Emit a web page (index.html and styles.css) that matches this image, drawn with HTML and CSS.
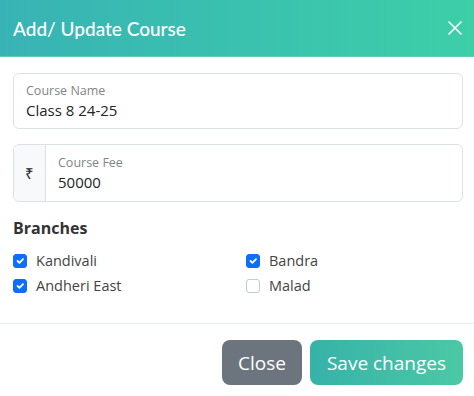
FILE: index.html
```html
<!DOCTYPE html>
<html lang="en">
<head>
    <meta charset="UTF-8">
    <meta name="viewport" content="width=device-width, initial-scale=1.0">
    <title>Add/ Update Course</title>
    <link rel="stylesheet" href="styles.css">
</head>
<body>
    <div class="modal">
        <div class="modal-header">
            <h5 class="modal-title">Add/ Update Course</h5>
            <button class="btn-close" aria-label="Close">
                <svg width="14" height="14" viewBox="0 0 14 14">
                    <path d="M1 1L13 13M13 1L1 13" stroke="#fff" stroke-width="1.6" stroke-linecap="round"/>
                </svg>
            </button>
        </div>
        <div class="modal-body">
            <div class="field">
                <label>Course Name</label>
                <div class="value">Class 8 24-25</div>
            </div>
            <div class="input-group">
                <span class="addon">₹</span>
                <div class="field field-inner">
                    <label>Course Fee</label>
                    <div class="value">50000</div>
                </div>
            </div>
            <h6 class="section-title">Branches</h6>
            <div class="branches">
                <label class="check"><span class="box checked"></span>Kandivali</label>
                <label class="check"><span class="box checked"></span>Bandra</label>
                <label class="check"><span class="box checked"></span>Andheri East</label>
                <label class="check"><span class="box"></span>Malad</label>
            </div>
        </div>
        <div class="modal-footer">
            <button class="btn btn-secondary">Close</button>
            <button class="btn btn-primary">Save changes</button>
        </div>
    </div>
</body>
</html>
```

FILE: styles.css
```css
body {
    margin: 0;
    font-family: "Open Sans", sans-serif;
    background-color: #fff;
    color: #212529;
}
.modal {
    width: 474px;
    height: 396px;
    display: flex;
    flex-direction: column;
}
.modal-header {
    height: 56px;
    display: flex;
    align-items: center;
    justify-content: space-between;
    padding: 0 12px 0 13px;
    background: linear-gradient(90deg, #38b3b5, #3dcfa8);
    border-bottom: 1px solid #5fd0b8;
}
.modal-title {
    margin: 0;
    font-family: "Lato", sans-serif;
    font-size: 19px;
    font-weight: 500;
    color: #fff;
}
.btn-close {
    border: none;
    background: none;
    padding: 0;
    width: 14px;
    height: 14px;
    display: flex;
}
.modal-body {
    padding: 16px 11px 0 13px;
    flex: 1;
}
.field {
    height: 56px;
    border: 1px solid #dee2e6;
    border-radius: 6px;
    padding: 0 12px;
    box-sizing: border-box;
    display: flex;
    flex-direction: column;
    justify-content: center;
}
.field label {
    font-size: 12.5px;
    color: #80858a;
    line-height: 17px;
}
.field .value {
    font-size: 15px;
    line-height: 22px;
    color: #212529;
}
.input-group {
    display: flex;
    margin-top: 15px;
    height: 56px;
    border: 1px solid #dee2e6;
    border-radius: 6px;
    overflow: hidden;
}
.addon {
    width: 31px;
    background-color: #f8f9fa;
    border-right: 1px solid #dee2e6;
    display: flex;
    align-items: center;
    justify-content: center;
    font-size: 15px;
}
.field-inner {
    flex: 1;
    border: none;
    border-radius: 0;
    height: 100%;
}
.section-title {
    margin: 15px 0 11px;
    font-size: 16px;
    font-weight: 700;
    color: #333;
}
.branches {
    display: grid;
    grid-template-columns: 233px 1fr;
    row-gap: 4px;
}
.check {
    display: flex;
    align-items: center;
    font-size: 14.5px;
    color: #444;
    line-height: 21px;
}
.box {
    width: 14px;
    height: 14px;
    border: 1px solid #c6cbd0;
    border-radius: 3px;
    margin-right: 9px;
    box-sizing: border-box;
}
.box.checked {
    border-color: #0d6efd;
    background: #0d6efd url("data:image/svg+xml,%3Csvg xmlns='http://www.w3.org/2000/svg' viewBox='0 0 20 20'%3E%3Cpath fill='none' stroke='%23fff' stroke-linecap='round' stroke-linejoin='round' stroke-width='3' d='M6 10l3 3l6-6'/%3E%3C/svg%3E") center / 100% no-repeat;
}
.modal-footer {
    border-top: 1px solid #e9ecef;
    display: flex;
    justify-content: flex-end;
    gap: 8px;
    padding: 16px 11px 11px;
}
.btn {
    height: 45px;
    border: none;
    border-radius: 8px;
    padding: 0 16px;
    font-family: "Open Sans", sans-serif;
    font-size: 19px;
    color: #fff;
}
.btn-secondary {
    background-color: #6c757d;
}
.btn-primary {
    padding: 0 17px;
    background: linear-gradient(90deg, #37b2a8, #4bc9a5);
}
```
